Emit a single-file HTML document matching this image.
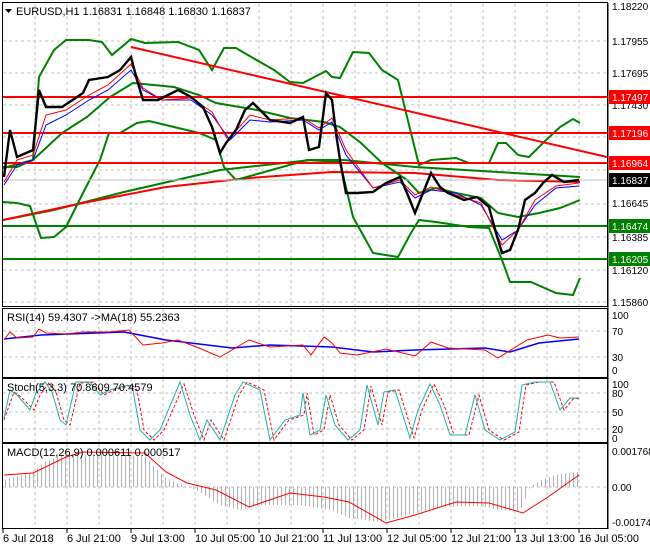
<!DOCTYPE html>
<html><head><meta charset="utf-8"><style>
html,body{margin:0;padding:0;background:#fff;}
svg{display:block;font-family:"Liberation Sans",sans-serif;}
text{font-size:11px;fill:#000;}
text.r{font-size:10px;}
</style></head><body>
<svg width="650" height="550" viewBox="0 0 650 550" xmlns="http://www.w3.org/2000/svg">
<defs>
<pattern id="hb" width="4" height="10" patternUnits="userSpaceOnUse"><rect x="1" y="0" width="1" height="10" fill="#b0b0b0"/></pattern>
</defs>
<rect width="650" height="550" fill="#fff"/>
<g stroke="#c0c0c0" stroke-dasharray="3,3" stroke-width="1">
<path d="M35 4V306M67 4V306M99 4V306M131 4V306M163 4V306M195 4V306M227 4V306M259 4V306M291 4V306M323 4V306M355 4V306M387 4V306M419 4V306M451 4V306M483 4V306M515 4V306M547 4V306M579 4V306"/>
<path d="M35 309V377M67 309V377M99 309V377M131 309V377M163 309V377M195 309V377M227 309V377M259 309V377M291 309V377M323 309V377M355 309V377M387 309V377M419 309V377M451 309V377M483 309V377M515 309V377M547 309V377M579 309V377"/>
<path d="M35 379V442M67 379V442M99 379V442M131 379V442M163 379V442M195 379V442M227 379V442M259 379V442M291 379V442M323 379V442M355 379V442M387 379V442M419 379V442M451 379V442M483 379V442M515 379V442M547 379V442M579 379V442"/>
<path d="M35 444V528M67 444V528M99 444V528M131 444V528M163 444V528M195 444V528M227 444V528M259 444V528M291 444V528M323 444V528M355 444V528M387 444V528M419 444V528M451 444V528M483 444V528M515 444V528M547 444V528M579 444V528"/>
<path d="M3 41H607M3 73H607M3 105H607M3 137H607M3 170H607M3 204H607M3 237H607M3 270H607M3 302H607"/>
<path d="M3 331H607M3 357H607M3 393H607M3 412H607M3 429H607M3 487H607"/>
</g>
<g fill="none" stroke="#000" stroke-width="1">
<rect x="2.5" y="2.5" width="605" height="304"/>
<rect x="2.5" y="308.5" width="605" height="69"/>
<rect x="2.5" y="378.5" width="605" height="64"/>
<rect x="2.5" y="443.5" width="605" height="85"/>
</g>
<g stroke="#000"><path d="M608 3V529"/></g>
<polyline fill="none" stroke="#008000" stroke-width="2" points="3,220 54,210 124,192 220,170 311,160 344,160 415,167 498,172 580,177"/>
<polyline fill="none" stroke="#ff0000" stroke-width="2" points="3,220 83,203 166,187 249,178 332,172 415,173 498,180 580,182"/>
<polyline fill="none" stroke="#008000" stroke-width="2" points="3,167 17,167 33,160 39,77 54,50 66,40 79,40 89,40 102,42 112,55 131,39 145,43 178,42 199,50 212,70 224,48 236,48 253,58 274,70 290,82 303,83 326,71 332,77 340,78 353,52 369,53 382,70 398,80 411,133 419,165 431,160 456,158 469,163 489,163 498,143 506,143 518,155 529,157 544,142 560,127 573,119 580,123"/>
<polyline fill="none" stroke="#008000" stroke-width="2" points="3,202 17,203 30,206 41,238 54,237 66,227 83,193 100,160 109,133 120,133 137,123 149,121 174,127 199,133 216,140 224,167 236,180 307,160 340,162 353,217 373,253 398,257 411,233 419,220 436,222 469,227 489,228 502,260 510,282 531,282 556,293 573,295 580,278"/>
<polyline fill="none" stroke="#008000" stroke-width="2" points="3,168 33,160 62,133 87,117 110,97 133,83 174,87 199,95 216,103 257,110 290,118 324,122 340,127 361,143 382,163 407,180 419,193 436,188 456,193 481,198 498,213 518,217 539,213 560,208 580,200"/>
<g stroke-width="2"><path d="M3 97H607M3 133H607M3 163H607" stroke="#ff0000"/><path d="M3 226H607M3 259H607" stroke="#008000"/></g>
<path d="M131 47L607 157" stroke="#ff0000" stroke-width="2"/>
<path d="M3 180H607" stroke="#c0c0c0"/>
<polyline fill="none" stroke="#0000ff" stroke-width="1" points="4,185 17,165 33,160 46,125 66,115 89,100 108,90 131,70 143,90 162,100 191,100 212,115 230,140 250,120 270,122 303,120 319,130 332,122 346,155 373,188 400,182 415,198 431,190 456,193 481,205 502,240 518,230 535,205 556,188 579,186"/>
<polyline fill="none" stroke="#ff0000" stroke-width="1" points="4,182 17,160 33,155 46,115 66,110 89,95 108,85 131,64 143,88 162,100 191,98 212,112 228,140 250,115 270,120 303,118 319,128 332,118 346,150 373,188 400,180 415,195 431,187 456,195 481,203 502,245 518,230 535,200 556,186 579,183"/>
<polyline fill="none" stroke="#000" stroke-width="2.4" points="4,177 10,130 17,157 33,150 39,90 46,107 62,107 83,93 89,80 108,77 120,70 131,57 137,80 143,100 158,100 178,90 191,97 203,107 212,127 220,153 226,143 236,130 245,110 253,103 270,120 290,123 303,117 309,150 319,147 326,93 332,100 336,133 340,160 346,193 357,193 373,192 386,183 400,177 407,193 415,213 423,193 431,173 440,187 448,193 464,200 477,197 489,207 496,233 502,253 510,250 518,230 525,200 535,193 543,183 552,175 564,182 579,180"/>
<g>
<text class="r" x="612" y="10">1.18220</text><text class="r" x="612" y="45">1.17955</text><text class="r" x="612" y="77">1.17695</text><text class="r" x="612" y="109">1.17430</text><text class="r" x="612" y="207">1.16645</text><text class="r" x="612" y="241">1.16385</text><text class="r" x="612" y="274">1.16120</text><text class="r" x="612" y="306">1.15860</text>
<rect x="609" y="90" width="41" height="14" fill="#ff0000"/><text class="r" x="612" y="101" style="fill:#fff">1.17497</text>
<rect x="609" y="126" width="41" height="14" fill="#ff0000"/><text class="r" x="612" y="137" style="fill:#fff">1.17196</text>
<rect x="609" y="156" width="41" height="14" fill="#ff0000"/><text class="r" x="612" y="167" style="fill:#fff">1.16964</text>
<rect x="609" y="173" width="41" height="14" fill="#000"/><text class="r" x="612" y="184" style="fill:#fff">1.16837</text>
<rect x="609" y="219" width="41" height="14" fill="#008000"/><text class="r" x="612" y="230" style="fill:#fff">1.16474</text>
<rect x="609" y="252" width="41" height="14" fill="#008000"/><text class="r" x="612" y="263" style="fill:#fff">1.16205</text>
</g>
<path d="M5 9L12 9L8.5 13Z" fill="#000"/>
<text x="16" y="15">EURUSD,H1  1.16831 1.16848 1.16830 1.16837</text>
<polyline fill="none" stroke="#0000ff" stroke-width="1.5" points="4,339 41,335 124,332 166,340 232,348 270,345 332,347 373,352 415,350 485,348 510,352 539,343 579,339"/>
<polyline fill="none" stroke="#ff0000" stroke-width="1" points="4,340 10,332 17,338 33,337 39,329 46,333 66,334 83,332 108,332 129,330 143,345 162,343 178,340 199,348 220,357 232,350 249,340 270,347 303,345 311,355 324,337 332,343 340,353 357,355 386,349 415,356 431,342 448,348 485,350 498,358 514,348 527,340 548,335 560,338 579,337"/>
<text x="7" y="321">RSI(14) 59.4307  -&gt;MA(18) 55.2363</text>
<text class="r" x="612" y="319">100</text><text class="r" x="612" y="335">70</text><text class="r" x="612" y="361">30</text><text class="r" x="612" y="374">0</text>
<polyline fill="none" stroke="#ff0000" stroke-dasharray="3,2" stroke-width="1" points="4,420 14,392 21,397 34,410 40,395 49,383 56,392 64,420 70,425 80,383 94,382 104,395 114,390 132,385 137,390 144,430 154,440 164,430 184,384 194,415 204,440 211,420 224,440 239,395 247,382 264,390 274,440 289,420 304,415 307,393 314,435 324,430 330,395 339,425 352,440 364,430 371,386 382,425 388,392 399,390 414,438 422,410 434,384 444,405 454,435 469,435 479,395 489,430 504,440 519,432 526,385 539,382 554,382 564,410 574,398 579,399"/>
<polyline fill="none" stroke="#20b2aa" stroke-width="1" points="4,418 10,390 17,395 30,410 36,393 45,382 52,392 60,420 66,425 76,382 90,382 100,395 110,390 128,385 133,390 140,430 150,440 160,430 180,382 190,415 200,440 207,420 220,440 235,395 243,382 260,390 270,440 285,420 300,415 303,393 310,435 320,430 326,395 335,425 348,440 360,430 367,385 378,425 384,392 395,390 410,438 418,410 430,384 440,405 450,435 465,435 475,395 485,430 500,440 515,432 522,385 535,382 550,382 560,410 570,398 579,398"/>
<text x="7" y="391">Stoch(5,3,3) 70.8609 70.4579</text>
<text class="r" x="612" y="388">100</text><text class="r" x="612" y="397">80</text><text class="r" x="612" y="416">50</text><text class="r" x="612" y="433">20</text><text class="r" x="612" y="442">0</text>
<polygon fill="url(#hb)" points="3,487 3,480 20,476 33,472 45,462 60,456 100,455 145,456 155,468 166,478 180,484 190,487 200,492 220,505 240,510 260,505 300,505 330,510 350,518 380,522 400,517 440,507 480,506 500,510 520,512 530,487 545,478 560,474 579,472 579,487"/>
<polyline fill="none" stroke="#ff0000" stroke-width="1" points="4,475 33,473 66,457 83,452 145,453 166,472 187,483 216,490 249,507 290,493 324,497 349,502 386,523 415,515 456,502 489,503 523,513 548,497 579,475"/>
<text x="7" y="456">MACD(12,26,9) 0.000611 0.000517</text>
<text class="r" x="612" y="455">0.001768</text><text class="r" x="612" y="491">0.00</text><text class="r" x="612" y="526">-0.00174</text>
<g stroke="#000"><path d="M3 529V533M67 529V533M131 529V533M195 529V533M259 529V533M323 529V533M387 529V533M451 529V533M515 529V533M579 529V533"/></g>
<text x="3" y="542">6 Jul 2018</text><text x="67" y="542">6 Jul 21:00</text><text x="131" y="542">9 Jul 13:00</text><text x="195" y="542">10 Jul 05:00</text><text x="259" y="542">10 Jul 21:00</text><text x="323" y="542">11 Jul 13:00</text><text x="387" y="542">12 Jul 05:00</text><text x="451" y="542">12 Jul 21:00</text><text x="515" y="542">13 Jul 13:00</text><text x="579" y="542">16 Jul 05:00</text>
</svg>
</body></html>
